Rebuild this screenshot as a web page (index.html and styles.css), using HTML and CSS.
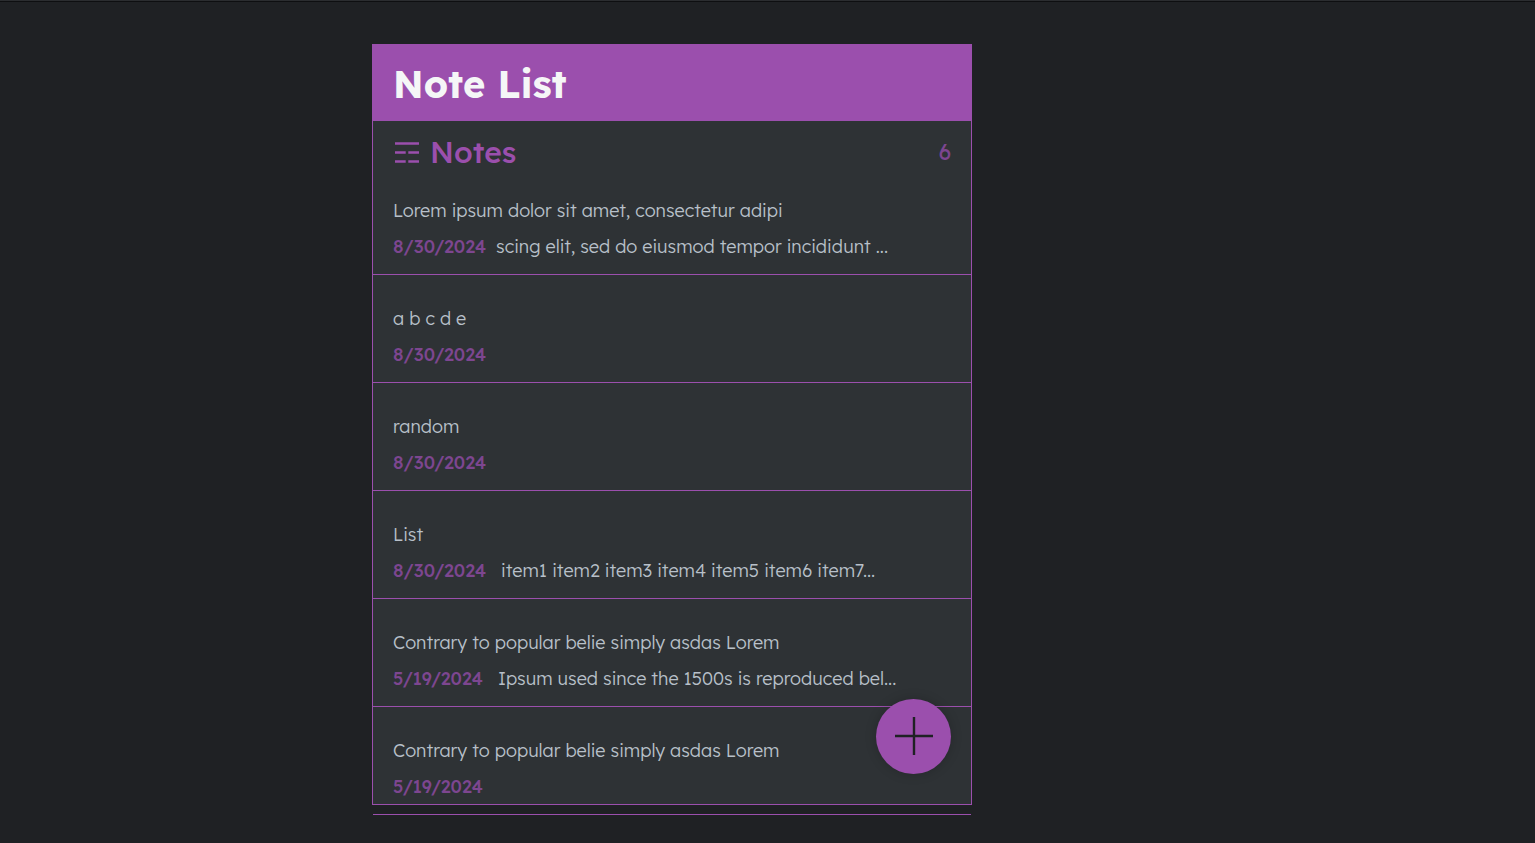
FILE: index.html
```html
<!DOCTYPE html>
<html lang="en">
<head>
<meta charset="utf-8">
<meta name="viewport" content="width=device-width, initial-scale=1">
<title>Note List</title>
<link rel="stylesheet" href="styles.css">
</head>
<body>
<div class="page">
  <main class="app">
    <header class="app-header"><h1 class="app-title">Note List</h1></header>
    <div class="notes-header">
      <h2 class="notes-title"><svg class="notes-icon" viewBox="0 0 24 22" aria-hidden="true"><path d="M0 2.5H24M0 11.5H10.7M13.3 11.5H24M0 20.5H10.7M13.3 20.5H24"/></svg>Notes</h2>
      <p class="notes-count">6</p>
    </div>
    <div class="notes-list">
      <a class="note" href="#note-1"><h3 class="note-title">Lorem ipsum dolor sit amet, consectetur adipi</h3><p class="note-line"><time class="note-date">8/30/2024</time><span class="note-text">scing elit, sed do eiusmod tempor incididunt ...</span></p></a>
      <a class="note" href="#note-2"><h3 class="note-title">a b c d e</h3><p class="note-line"><time class="note-date">8/30/2024</time></p></a>
      <a class="note" href="#note-3"><h3 class="note-title">random</h3><p class="note-line"><time class="note-date">8/30/2024</time></p></a>
      <a class="note" href="#note-4"><h3 class="note-title">List</h3><p class="note-line"><time class="note-date">8/30/2024</time><span class="note-text">&nbsp;item1 item2 item3 item4 item5 item6 item7...</span></p></a>
      <a class="note" href="#note-5"><h3 class="note-title">Contrary to popular belie simply asdas Lorem</h3><p class="note-line"><time class="note-date">5/19/2024</time><span class="note-text">&nbsp;Ipsum used since the 1500s is reproduced bel...</span></p></a>
      <a class="note" href="#note-6"><h3 class="note-title">Contrary to popular belie simply asdas Lorem</h3><p class="note-line"><time class="note-date">5/19/2024</time></p></a>
    </div>
    <button class="add-button" type="button" aria-label="Add note"><svg class="add-icon" viewBox="0 0 38 38" aria-hidden="true"><path d="M19 0V38M0 19H38"/></svg></button>
  </main>
</div>
</body>
</html>
```
FILE: styles.css
```css
:root {
  --main: #9b4fad;
  --muted: #7d4690;
  --text: #b8c0c9;
  --light: #f5f6f7;
  --surface: #2e3235;
  --background: #1f2124;
}

* {
  box-sizing: border-box;
  margin: 0;
  padding: 0;
}

body {
  background: var(--background);
  color: var(--text);
  font-family: Lexend, Inter, sans-serif;
  font-size: 18px;
  font-weight: 300;
  line-height: 36px;
}

.page {
  height: 100vh;
  padding: 42px 191px 39px 0;
  border-top: 1px solid #2b2d30;
  box-shadow: inset 0 1px #0e0f11;
}

.app {
  position: relative;
  max-width: 600px;
  height: 100%;
  margin: 1px auto 0;
  border: 1px solid var(--main);
  background: var(--surface);
}

.app-header {
  padding: 15px 20px 13px;
  background: var(--main);
}

.app-title {
  color: var(--light);
  font-size: 38px;
  font-weight: 700;
  line-height: 48px;
}

.notes-header {
  display: flex;
  align-items: center;
  justify-content: space-between;
  padding: 16px 20px 0;
}

.notes-title {
  display: flex;
  align-items: center;
  gap: 11px;
  color: var(--main);
  font-size: 30px;
  font-weight: 500;
  line-height: 30px;
}

.notes-icon {
  width: 24px;
  height: 22px;
  margin-left: 2px;
  fill: none;
  stroke: currentColor;
  stroke-width: 2.6;
}

.notes-count {
  color: var(--muted);
  font-size: 22px;
  font-weight: 400;
  line-height: 30px;
}

.note {
  display: block;
  padding: 26px 20px 9px;
  border-bottom: 1px solid var(--main);
  color: inherit;
  text-decoration: none;
}

.note-title {
  font-size: 18px;
  font-weight: inherit;
}

.note-line {
  display: flex;
  gap: 10px;
  white-space: nowrap;
}

.note-date {
  color: var(--muted);
  font-weight: 500;
}

.add-button {
  position: absolute;
  right: 20px;
  bottom: 30px;
  display: flex;
  align-items: center;
  justify-content: center;
  width: 75px;
  height: 75px;
  padding-bottom: 1px;
  border: 0;
  border-radius: 50%;
  background: var(--main);
  color: var(--background);
  box-shadow: 0 0 12px rgba(0, 0, 0, 0.2);
  cursor: pointer;
}

.add-icon {
  width: 38px;
  height: 38px;
  fill: none;
  stroke: currentColor;
  stroke-width: 2.4;
}
```
